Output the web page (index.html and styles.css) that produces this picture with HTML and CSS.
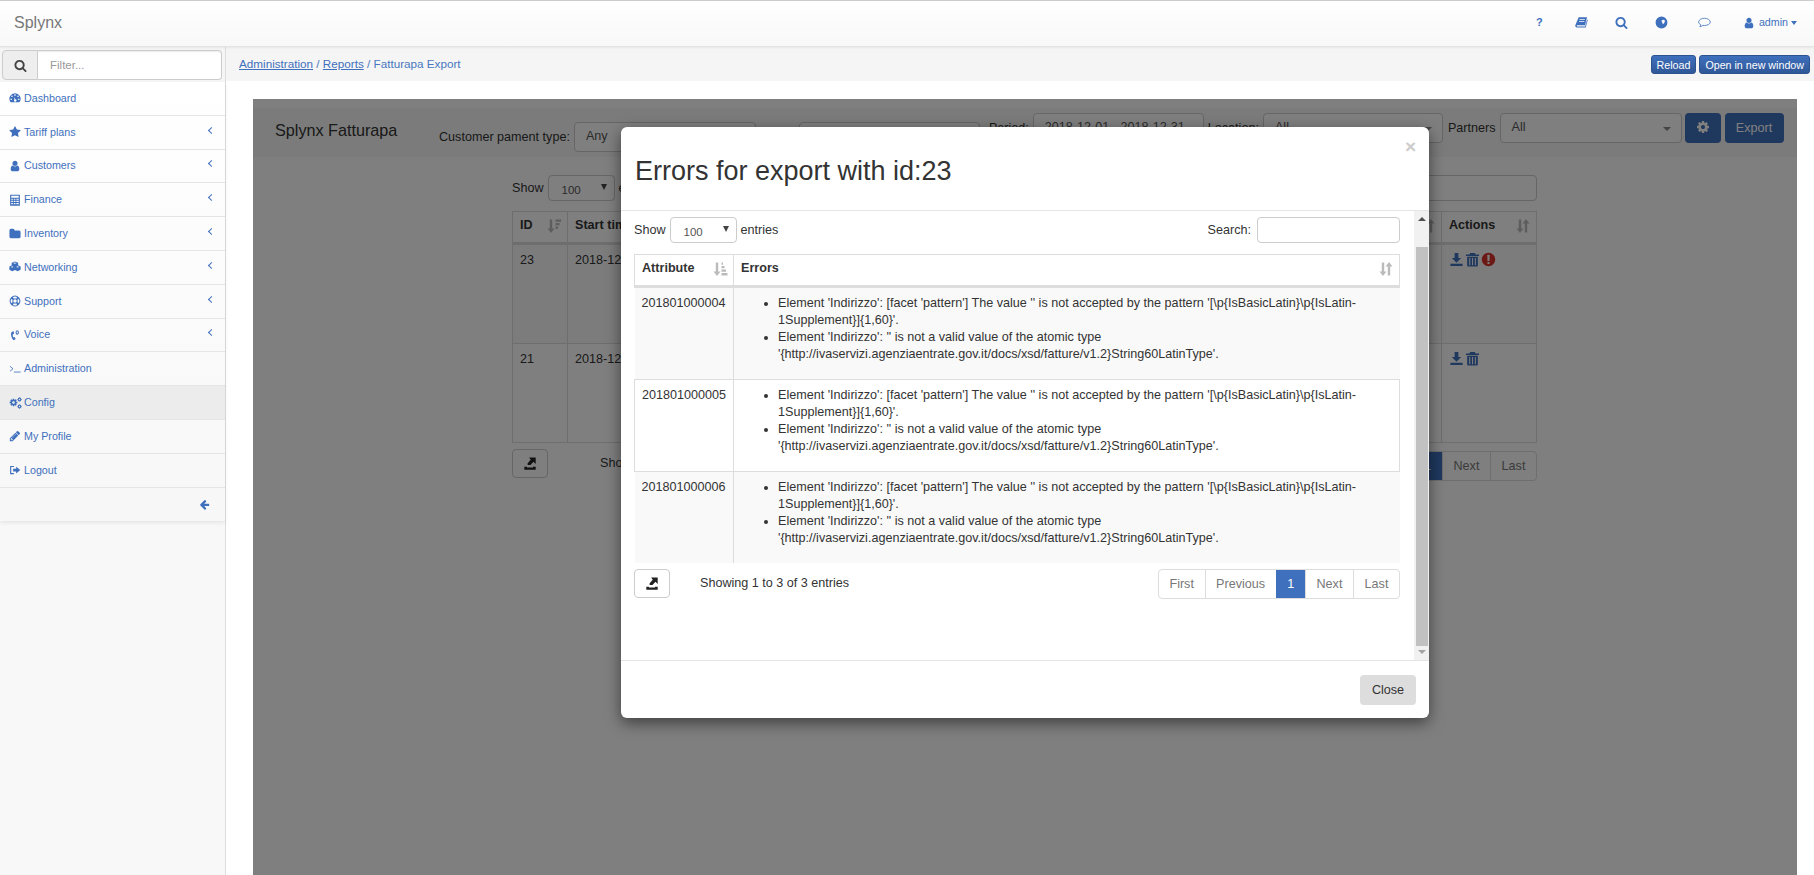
FILE: index.html

```html
<!DOCTYPE html>
<html lang="en">
<head>
    <meta charset="UTF-8">
    <title>Splynx - Fatturapa Export</title>
    <link rel="stylesheet" href="styles.css">
</head>
<body>

    <!-- Icon set -->
    <svg class="icon-defs" xmlns="http://www.w3.org/2000/svg">
        <symbol id="i-star" viewBox="0 0 1792 1792"><path d="M1728 647q0 22-26 48l-363 354 86 500q1 7 1 20 0 21-10.5 35.5t-30.5 14.5q-19 0-40-12l-449-236-449 236q-22 12-40 12-21 0-31.5-14.5t-10.5-35.5q0-6 2-20l86-500-364-354q-25-27-25-48 0-37 56-46l502-73 225-455q19-41 49-41t49 41l225 455 502 73q56 9 56 46z"/></symbol>
        <symbol id="i-search" viewBox="0 0 1792 1792"><path d="M1216 832q0-185-131.5-316.5t-316.5-131.5-316.5 131.5-131.5 316.5 131.5 316.5 316.5 131.5 316.5-131.5 131.5-316.5zm512 832q0 52-38 90t-90 38q-54 0-90-38l-343-342q-179 124-399 124-143 0-273.5-55.5t-225-150-150-225-55.5-273.5 55.5-273.5 150-225 225-150 273.5-55.5 273.5 55.5 225 150 150 225 55.5 273.5q0 220-124 399l343 343q37 37 37 90z"/></symbol>
        <symbol id="i-user" viewBox="0 0 1792 1792"><path d="M1536 1399q0 109-62.5 187t-150.5 78h-854q-88 0-150.5-78t-62.5-187q0-85 8.5-160.5t31.5-152 58.5-131 94-89 134.5-34.5q131 128 313 128t313-128q76 0 134.5 34.5t94 89 58.5 131 31.5 152 8.5 160.5zm-256-887q0 159-112.5 271.5t-271.5 112.5-271.5-112.5-112.5-271.5 112.5-271.5 271.5-112.5 271.5 112.5 112.5 271.5z"/></symbol>
        <symbol id="i-folder" viewBox="0 0 1792 1792"><path d="M1728 608v704q0 92-66 158t-158 66h-1216q-92 0-158-66t-66-158v-960q0-92 66-158t158-66h320q92 0 158 66t66 158v32h672q92 0 158 66t66 158z"/></symbol>
        <symbol id="i-arrow-left" viewBox="0 0 1792 1792"><path d="M1664 896v128q0 53-32.5 90.5t-84.5 37.5h-704l293 294q38 36 38 90t-38 90l-75 76q-37 37-90 37-52 0-91-37l-651-652q-37-37-37-90 0-52 37-91l651-650q38-38 91-38 52 0 90 38l75 74q38 38 38 91t-38 91l-293 293h704q52 0 84.5 37.5t32.5 90.5z"/></symbol>
        <symbol id="i-pencil" viewBox="0 0 1792 1792"><path d="M491 1536l91-91-235-235-91 91v107h128v128h107zm523-928q0-22-22-22-10 0-17 7l-542 542q-7 7-7 17 0 22 22 22 10 0 17-7l542-542q7-7 7-17zm-54-192l416 416-832 832h-416v-416zm683 96q0 53-37 90l-166 166-416-416 166-165q36-38 90-38 53 0 91 38l235 234q37 39 37 91z"/></symbol>
        <symbol id="i-cog" viewBox="0 0 1792 1792"><path d="M1152 896q0-106-75-181t-181-75-181 75-75 181 75 181 181 75 181-75 75-181zm512-109v222q0 12-8 23t-20 13l-185 28q-19 54-39 91 35 50 107 138 10 12 10 25t-9 23q-27 37-99 108t-94 71q-12 0-26-9l-138-108q-44 23-91 38-16 136-29 186-7 28-36 28h-222q-14 0-24.5-8.5t-11.5-21.5l-28-184q-49-16-90-37l-141 107q-10 9-25 9-14 0-25-11-126-114-165-168-7-10-7-23 0-12 8-23 15-21 51-66.5t54-70.5q-27-50-41-99l-183-27q-13-2-21-12.5t-8-23.5v-222q0-12 8-23t19-13l186-28q14-46 39-92-40-57-107-138-10-12-10-24 0-10 9-23 26-36 98.5-107.5t94.5-71.5q13 0 26 10l138 107q44-23 91-38 16-136 29-186 7-28 36-28h222q14 0 24.5 8.5t11.5 21.5l28 184q49 16 90 37l142-107q9-9 24-9 13 0 25 10 129 119 165 170 7 8 7 22 0 12-8 23-15 21-51 66.5t-54 70.5q26 50 41 98l183 28q13 2 21 12.5t8 23.5z"/></symbol>
        <symbol id="i-dashboard" viewBox="0 0 16 16"><path fill-rule="evenodd" d="M8 1.500a7.500 7.500 0 0 0-6.400 11.400c.2.400.6.600 1 .600h10.800c.4 0 .8-.2 1-.6A7.500 7.500 0 0 0 8 1.500zM8 3a1.100 1.100 0 1 1 0 2.200A1.100 1.100 0 0 1 8 3zM4 4.600a1.100 1.100 0 1 1 0 2.200 1.100 1.100 0 0 1 0-2.200zm8 0a1.100 1.100 0 1 1 0 2.200 1.100 1.100 0 0 1 0-2.200zM2.900 8.500a1.100 1.100 0 1 1 0 2.200 1.100 1.100 0 0 1 0-2.200zm10.200 0a1.100 1.100 0 1 1 0 2.200 1.100 1.100 0 0 1 0-2.200zM6.800 6.600l1.600 3.200a1.600 1.600 0 1 1-1.200.5z"/></symbol>
        <symbol id="i-calculator" viewBox="0 0 16 16"><path fill-rule="evenodd" d="M1.500 1h13v14.500h-13zM3 2.300v2.600h10V2.300zM3 6.200v1.600h2.200V6.200zm3.400 0v1.600h2.200V6.200zm3.400 0v1.600H13V6.200zM3 9v1.600h2.200V9zm3.400 0v1.600h2.200V9zm3.400 0v1.600H13V9zM3 11.900v1.900h2.200v-1.900zm3.400 0v1.900h2.200v-1.900zm3.400 0v1.900H13v-1.900z"/></symbol>
        <symbol id="i-cubes" viewBox="0 0 16 16"><path fill-rule="evenodd" d="M7.800.5l4.400 1.700v3.600l3.300 1.400v4.300l-4 2.100-3.500-1.700-3.700 1.700-3.800-2V7.200l3.100-1.400V2.200zM7.800 1.900L5.400 2.800l2.400 1 2.400-1zM4.200 7l-2 .9 2 .9 2-.9zm7.300 0l-2 .9 2 .9 2-.9z"/></symbol>
        <symbol id="i-lifering" viewBox="0 0 16 16"><path fill-rule="evenodd" d="M8 .8a7.200 7.200 0 1 1 0 14.400A7.200 7.200 0 0 1 8 .8zM5.300 2.800l1 2.100a3.500 3.500 0 0 1 3.400 0l1-2.100a5.800 5.800 0 0 0-5.400 0zm-2.500 2.500a5.800 5.800 0 0 0 0 5.400l2.100-1a3.500 3.500 0 0 1 0-3.400zm10.400 0l-2.100 1a3.500 3.500 0 0 1 0 3.400l2.100 1a5.800 5.800 0 0 0 0-5.400zM6.300 11.100l-1 2.100a5.800 5.800 0 0 0 5.400 0l-1-2.100a3.500 3.500 0 0 1-3.400 0zM8 5.700a2.300 2.300 0 1 0 0 4.600 2.300 2.300 0 0 0 0-4.600z"/></symbol>
        <symbol id="i-voice" viewBox="0 0 16 16"><path d="M5.500 3L3 4.800C2 7.800 3.400 12.300 6 15l2.600-1.300c.3-.2.3-.5.2-.8L7.500 11c-.2-.2-.4-.3-.7-.2l-1.100.5C5 9.800 4.900 8 5.100 7l1.200-.4c.3-.1.400-.3.400-.6L6.200 3.300c-.1-.3-.4-.4-.7-.3z"/><path d="M11 1.500c1.500 0 2.200 1.400 2.200 3s-.7 3-2.200 3-2.200-1.400-2.200-3 .7-3 2.200-3zm0 1.500c-.5 0-.8.700-.8 1.500S10.500 6 11 6s.8-.7.8-1.500S11.500 3 11 3z"/></symbol>
        <symbol id="i-terminal" viewBox="0 0 16 16"><path d="M1.300 4.400l4 3.300-4 3.300" fill="none" stroke="currentColor" stroke-width="1.100"/><path d="M6.500 11.500h9v1.100h-9z"/></symbol>
        <symbol id="i-signout" viewBox="0 0 16 16"><path d="M1.500 2.500h5v1.600H3v8h3.500v1.600h-5z"/><path d="M9.500 3.500l5.500 4.600-5.500 4.600V10H5.500V6.200h4z"/></symbol>
        <symbol id="i-book" viewBox="0 0 16 16"><path fill-rule="evenodd" d="M4.500 1.500h10.300l-2.500 10H2.800c-.8 0-1 1.300 0 1.300h9.700l2.400-8.500.8.500-2.500 9.200H2.500C.8 14 0 12.500.5 11zM5.800 4h6.300v1H5.500zM5.200 6h6.300v1H4.900z"/></symbol>
        <symbol id="i-globe" viewBox="0 0 16 16"><path fill-rule="evenodd" d="M8 .7a7.300 7.300 0 1 1 0 14.600A7.300 7.300 0 0 1 8 .7zm2.200 3.800L8 5.500l.5 2 1.300 2.700 1.600-1.500.8-2.400-.6-1.300z"/></symbol>
        <symbol id="i-comment" viewBox="0 0 16 16"><path d="M8 2.800C4.200 2.800.8 4.800.8 7.400c0 1.500 1.100 2.700 2.700 3.500-.1.900-.6 1.600-1.200 2.300 1.400-.1 2.700-.8 3.600-1.700.7.100 1.400.2 2.100.2 3.800 0 7.200-2 7.200-4.300S11.800 2.800 8 2.800z" fill="none" stroke="currentColor" stroke-width="1"/></symbol>
        <symbol id="i-sort-desc" viewBox="0 0 16 16"><path d="M3.800 1.500h2.400v9H8.500L5 15 1.500 10.500h2.300zM9.500 1.500H15v2.200H9.500zM9.500 5H13.500v2.200H9.500zM9.500 8.500H12v2.200H9.500z"/></symbol>
        <symbol id="i-sort-asc" viewBox="0 0 16 16"><path d="M3.800 1.500h2.400v9H8.500L5 15 1.500 10.500h2.300zM9.500 1.500H11v2.200H9.500zM9.500 5H12.500v2.200H9.500zM9.500 8.500H14v2.200H9.500zM9.500 12H15.500v2.500H9.500z"/></symbol>
        <symbol id="i-sort" viewBox="0 0 16 16"><path d="M3.800 1.500h2.400v9H8.500L5 15 1.500 10.500h2.300zM9.800 14.500v-9H7.500L11 1l3.500 4.500h-2.300v9z"/></symbol>
        <symbol id="i-download" viewBox="0 0 16 16"><path d="M6 1h4v5.500h3L8 11.500 3 6.500h3zM1.500 12.500h13V15h-13z"/></symbol>
        <symbol id="i-trash" viewBox="0 0 16 16"><path fill-rule="evenodd" d="M5.500 1h5l.8 1.700H15v1.500H1V2.700h3.700zM2.300 5h11.400v9.200c0 .8-.5 1.300-1.200 1.300h-9c-.7 0-1.200-.5-1.200-1.300zm2.200 1.500v7.500h1.100V6.500zm3 0v7.500h1.100V6.500zm3 0v7.500h1.100V6.500z"/></symbol>
        <symbol id="i-alert" viewBox="0 0 16 16"><path fill-rule="evenodd" d="M8 .8a7.200 7.200 0 1 1 0 14.400A7.200 7.200 0 0 1 8 .8zM6.700 3l.2 6.500h2.200L9.300 3zM6.900 10.600v2.100h2.200v-2.100z"/></symbol>
        <symbol id="i-export" viewBox="0 0 16 16"><path d="M7 .5h7.500V8L12 5.500 8.500 9H5.300V7L8.800 3zM1.500 11h3v1h7v-1h3v3.500h-13z"/></symbol>
    </svg>

    <!-- Top bar -->
    <header class="topbar">
        <div class="brand">Splynx</div>
        <nav class="top-icons">
            <a class="top-icon top-help">?</a>
            <a class="top-icon"><svg class="ic ic-13"><use href="#i-book"/></svg></a>
            <a class="top-icon"><svg class="ic ic-13"><use href="#i-search"/></svg></a>
            <a class="top-icon top-globe"><svg class="ic ic-13"><use href="#i-globe"/></svg></a>
            <a class="top-icon"><svg class="ic ic-13"><use href="#i-comment"/></svg></a>
            <a class="top-user"><svg class="ic ic-12"><use href="#i-user"/></svg> admin <span class="caret"></span></a>
        </nav>
    </header>

    <div class="layout">

        <!-- Sidebar Navigation -->
        <aside class="sidebar">
            <div class="filter">
                <span class="filter-addon"><svg class="ic ic-13"><use href="#i-search"/></svg></span>
                <input class="filter-input" type="text" placeholder="Filter...">
            </div>
            <ul class="menu">
                <li><a><svg class="ic"><use href="#i-dashboard"/></svg>Dashboard</a></li>
                <li><a><svg class="ic"><use href="#i-star"/></svg>Tariff plans<span class="chevron"></span></a></li>
                <li><a><svg class="ic"><use href="#i-user"/></svg>Customers<span class="chevron"></span></a></li>
                <li><a><svg class="ic"><use href="#i-calculator"/></svg>Finance<span class="chevron"></span></a></li>
                <li><a><svg class="ic"><use href="#i-folder"/></svg>Inventory<span class="chevron"></span></a></li>
                <li><a><svg class="ic"><use href="#i-cubes"/></svg>Networking<span class="chevron"></span></a></li>
                <li><a><svg class="ic"><use href="#i-lifering"/></svg>Support<span class="chevron"></span></a></li>
                <li><a><svg class="ic"><use href="#i-voice"/></svg>Voice<span class="chevron"></span></a></li>
                <li><a><svg class="ic"><use href="#i-terminal"/></svg>Administration</a></li>
                <li class="active"><a><span class="cogs"><svg class="cog-big"><use href="#i-cog"/></svg><svg class="cog-small"><use href="#i-cog"/></svg><svg class="cog-small cog-low"><use href="#i-cog"/></svg></span>Config</a></li>
                <li><a><svg class="ic"><use href="#i-pencil"/></svg>My Profile</a></li>
                <li><a><svg class="ic"><use href="#i-signout"/></svg>Logout</a></li>
                <li class="collapse-row"><svg class="ic ic-11"><use href="#i-arrow-left"/></svg></li>
            </ul>
        </aside>

        <!-- Main Content -->
        <main class="main">
            <div class="crumbs">
                <div class="crumb-path"><a href="#">Administration</a> / <a href="#">Reports</a> / Fatturapa Export</div>
                <div class="crumb-actions">
                    <button class="small-btn">Reload</button>
                    <button class="small-btn">Open in new window</button>
                </div>
            </div>

            <div class="frame-wrap">
                <div class="frame">

                    <!-- Page behind the dialog -->
                    <div class="panel-head">
                        <div class="panel-title">Splynx Fatturapa</div>
                        <div class="field field-low">
                            <label>Customer pament type:</label>
                            <div class="fake-select w-182">Any<span class="caret-grey"></span></div>
                        </div>
                        <div class="field field-low field-second">
                            <div class="fake-select w-181">All<span class="caret-grey"></span></div>
                        </div>
                        <div class="field field-period">
                            <label>Period:</label>
                            <div class="fake-select w-171">2018-12-01 - 2018-12-31</div>
                        </div>
                        <div class="field field-location">
                            <label>Location:</label>
                            <div class="fake-select w-180">All<span class="caret-grey"></span></div>
                        </div>
                        <div class="field field-partners">
                            <label>Partners</label>
                            <div class="fake-select w-182">All<span class="caret-grey"></span></div>
                        </div>
                        <button class="gear-btn"><svg class="ic ic-14"><use href="#i-cog"/></svg></button>
                        <button class="export-btn">Export</button>
                    </div>

                    <div class="panel-body">
                        <div class="list-top">
                            <div class="show-row">Show <div class="mini-select">100<span class="caret-dark"></span></div> entries</div>
                            <div class="back-search"></div>
                        </div>
                        <table class="back-table">
                            <thead>
                                <tr>
                                    <th class="col-id">ID<svg class="sort-ic"><use href="#i-sort-desc"/></svg></th>
                                    <th class="col-start">Start time</th>
                                    <th>Status<svg class="sort-ic"><use href="#i-sort"/></svg></th>
                                    <th class="col-actions">Actions<svg class="sort-ic"><use href="#i-sort"/></svg></th>
                                </tr>
                            </thead>
                            <tbody>
                                <tr class="row-first">
                                    <td>23</td>
                                    <td>2018-12-20 10:42:17</td>
                                    <td>Error</td>
                                    <td>
                                        <svg class="act act-blue"><use href="#i-download"/></svg><svg class="act act-blue"><use href="#i-trash"/></svg><svg class="act act-red"><use href="#i-alert"/></svg>
                                    </td>
                                </tr>
                                <tr class="row-second">
                                    <td>21</td>
                                    <td>2018-12-19 16:05:33</td>
                                    <td>Done</td>
                                    <td>
                                        <svg class="act act-blue"><use href="#i-download"/></svg><svg class="act act-blue"><use href="#i-trash"/></svg>
                                    </td>
                                </tr>
                            </tbody>
                        </table>
                        <div class="list-bottom">
                            <button class="export-icon-btn"><svg class="ic ic-14"><use href="#i-export"/></svg></button>
                            <span class="list-info">Showing 1 to 2 of 2 entries</span>
                            <div class="pager back-pager">
                                <a class="active">1</a><a>Next</a><a>Last</a>
                            </div>
                        </div>
                    </div>

                    <div class="backdrop"></div>

                    <!-- Dialog -->
                    <div class="modal">
                        <div class="modal-head">
                            <span class="modal-close">&times;</span>
                            <h3>Errors for export with id:23</h3>
                        </div>
                        <div class="modal-body">
                            <div class="modal-scroll">
                                <div class="list-top modal-top">
                                    <div class="show-row">Show <div class="mini-select">100<span class="caret-dark"></span></div> entries</div>
                                    <div class="search-row">Search: <input class="search-input" type="text"></div>
                                </div>
                                <table class="error-table">
                                    <thead>
                                        <tr>
                                            <th class="col-attr">Attribute<svg class="sort-ic"><use href="#i-sort-asc"/></svg></th>
                                            <th>Errors<svg class="sort-ic"><use href="#i-sort"/></svg></th>
                                        </tr>
                                    </thead>
                                    <tbody>
                                        <tr class="striped">
                                            <td>201801000004</td>
                                            <td>
                                                <ul>
                                                    <li>Element 'Indirizzo': [facet 'pattern'] The value '' is not accepted by the pattern '[\p{IsBasicLatin}\p{IsLatin-1Supplement}]{1,60}'.</li>
                                                    <li>Element 'Indirizzo': '' is not a valid value of the atomic type '{http://ivaservizi.agenziaentrate.gov.it/docs/xsd/fatture/v1.2}String60LatinType'.</li>
                                                </ul>
                                            </td>
                                        </tr>
                                        <tr>
                                            <td>201801000005</td>
                                            <td>
                                                <ul>
                                                    <li>Element 'Indirizzo': [facet 'pattern'] The value '' is not accepted by the pattern '[\p{IsBasicLatin}\p{IsLatin-1Supplement}]{1,60}'.</li>
                                                    <li>Element 'Indirizzo': '' is not a valid value of the atomic type '{http://ivaservizi.agenziaentrate.gov.it/docs/xsd/fatture/v1.2}String60LatinType'.</li>
                                                </ul>
                                            </td>
                                        </tr>
                                        <tr class="striped">
                                            <td>201801000006</td>
                                            <td>
                                                <ul>
                                                    <li>Element 'Indirizzo': [facet 'pattern'] The value '' is not accepted by the pattern '[\p{IsBasicLatin}\p{IsLatin-1Supplement}]{1,60}'.</li>
                                                    <li>Element 'Indirizzo': '' is not a valid value of the atomic type '{http://ivaservizi.agenziaentrate.gov.it/docs/xsd/fatture/v1.2}String60LatinType'.</li>
                                                </ul>
                                            </td>
                                        </tr>
                                    </tbody>
                                </table>
                                <div class="list-bottom modal-bottom">
                                    <button class="export-icon-btn"><svg class="ic ic-14"><use href="#i-export"/></svg></button>
                                    <span class="list-info">Showing 1 to 3 of 3 entries</span>
                                    <div class="pager">
                                        <a>First</a><a>Previous</a><a class="active">1</a><a>Next</a><a>Last</a>
                                    </div>
                                </div>
                            </div>
                            <div class="scrollbar">
                                <span class="arrow-up"></span>
                                <div class="thumb"></div>
                                <span class="arrow-down"></span>
                            </div>
                        </div>
                        <div class="modal-foot">
                            <button class="close-btn">Close</button>
                        </div>
                    </div>

                </div>
            </div>
        </main>
    </div>

</body>
</html>
```

FILE: styles.css

```css
/* General Styles */
* {
    margin: 0;
    padding: 0;
    box-sizing: border-box;
}

html, body {
    height: 875px;
    overflow: hidden;
}

body {
    display: flex;
    flex-direction: column;
    background: #fff;
    color: #333;
    font-family: "Liberation Sans", Arial, sans-serif;
    font-size: 12.6px;
    line-height: 17px;
}

button, input {
    font-family: inherit;
}

.icon-defs {
    display: none;
}

.ic {
    display: inline-block;
    width: 13px;
    height: 13px;
    fill: currentColor;
    flex: none;
}

.ic-11 { width: 11px; height: 11px; }
.ic-12 { width: 12px; height: 12px; }
.ic-13 { width: 13px; height: 13px; }
.ic-14 { width: 14px; height: 14px; }

/* Top bar */
.topbar {
    flex: none;
    height: 47px;
    display: flex;
    align-items: center;
    justify-content: space-between;
    padding: 0 17px 2px 14px;
    border-top: 1px solid #ccc;
    border-bottom: 1px solid #e4e4e4;
    background: linear-gradient(#fff, #f8f8f8);
    box-shadow: 0 1px 2px rgba(0, 0, 0, 0.06);
    position: relative;
}

.brand {
    font-size: 16px;
    color: #777;
}

.top-icons {
    display: flex;
    align-items: center;
    color: #3f70bd;
}

.top-icon {
    width: 13px;
    height: 13px;
    margin-right: 27px;
    display: flex;
    align-items: center;
    justify-content: center;
}

.top-help {
    font-size: 11px;
    font-weight: bold;
    margin-right: 29px;
}

.top-globe {
    margin-right: 30px;
}

.top-user {
    display: flex;
    align-items: center;
    gap: 4px;
    font-size: 10.7px;
    margin-left: 5px;
}

.caret {
    width: 0;
    height: 0;
    border-left: 3.5px solid transparent;
    border-right: 3.5px solid transparent;
    border-top: 4px solid #3f70bd;
    margin-left: -1px;
}

.layout {
    flex: 1;
    display: flex;
    min-height: 0;
}

/* Sidebar Navigation */
.sidebar {
    flex: none;
    width: 226px;
    background: #f8f8f8;
    border-right: 1px solid #ddd;
}

.filter {
    display: flex;
    height: 35px;
    padding: 3px 3px 2px 2px;
    background: #f5f5f5;
}

.filter-addon {
    width: 36px;
    display: flex;
    align-items: center;
    justify-content: center;
    color: #444;
    background: #eee;
    border: 1px solid #ccc;
    border-radius: 4px 0 0 4px;
}

.filter-input {
    flex: 1;
    min-width: 0;
    border: 1px solid #ccc;
    border-left: 0;
    border-radius: 0 4px 4px 0;
    padding: 0 12px;
    font-size: 11.5px;
    background: #fff;
    box-shadow: inset 0 1px 1px rgba(0, 0, 0, 0.075);
}

.filter-input::placeholder {
    color: #999;
}

.menu {
    list-style: none;
    background: linear-gradient(#fff, #f7f7f7);
    box-shadow: 0 2px 4px rgba(0, 0, 0, 0.08);
}

.menu li {
    height: 33.8px;
    border-bottom: 1px solid #e5e5e5;
}

.menu a {
    height: 100%;
    display: flex;
    align-items: center;
    padding: 0 11px 0 9px;
    color: #3f70bd;
    font-size: 10.7px;
}

.menu .ic, .cogs {
    margin-right: 3px;
    width: 12px;
    height: 12px;
}

.menu .active {
    background: #ececec;
}

.chevron {
    margin-left: auto;
    margin-bottom: 4px;
    width: 5px;
    height: 5px;
    border-left: 1px solid #3f70bd;
    border-bottom: 1px solid #3f70bd;
    transform: rotate(45deg);
}

.cogs {
    position: relative;
    flex: none;
}

.cog-big {
    position: absolute;
    left: 0;
    top: 1.5px;
    width: 9px;
    height: 9px;
    fill: #3f70bd;
}

.cog-small {
    position: absolute;
    left: 8px;
    top: 0;
    width: 5px;
    height: 5px;
    fill: #3f70bd;
}

.cog-low {
    top: 7px;
}

.menu .collapse-row {
    display: flex;
    align-items: center;
    justify-content: flex-end;
    padding-right: 15px;
    color: #3f70bd;
    border-bottom: 0;
}

.menu .collapse-row .ic {
    width: 11px;
    height: 11px;
    margin: 0;
}

/* Main Content */
.main {
    flex: 1;
    min-width: 0;
    display: flex;
    flex-direction: column;
}

.crumbs {
    flex: none;
    height: 34px;
    display: flex;
    align-items: center;
    justify-content: space-between;
    padding: 0 4px 0 13px;
    background: #f5f5f5;
    font-size: 11.7px;
    color: #4a78c0;
}

.crumb-path {
    padding-bottom: 2px;
}

.crumb-path a {
    color: #3f70bd;
    text-decoration: underline;
}

.crumb-actions {
    display: flex;
    gap: 3px;
    padding-top: 1px;
}

.small-btn {
    height: 19px;
    padding: 0 5px;
    border: 1px solid #2c5290;
    border-radius: 3px;
    background: linear-gradient(#3f70bd, #2f5797);
    color: #fff;
    font-size: 10.7px;
}

.frame-wrap {
    flex: 1;
    min-height: 0;
    padding: 18px 17px 0 27px;
}

.frame {
    position: relative;
    height: 100%;
    background: #fff;
    overflow: hidden;
}

/* Page behind the dialog */
.panel-head {
    height: 49px;
    margin-top: 9px;
    padding: 5px 0 0 22px;
    display: flex;
    align-items: flex-start;
    background: #f6f6f6;
}

.panel-title {
    flex: none;
    width: 164px;
    padding-top: 9px;
    font-size: 16.2px;
    color: #333;
}

.field {
    flex: none;
    display: flex;
    align-items: center;
    gap: 4px;
}

.field label {
    white-space: nowrap;
}

.field-low {
    margin-top: 9px;
}

.field-second {
    margin-left: 43px;
}

.field-period {
    margin-left: 9px;
}

.field-location {
    margin-left: 4px;
}

.field-partners {
    margin-left: 5px;
}

.fake-select {
    position: relative;
    height: 30px;
    padding: 0 11px;
    line-height: 27px;
    background: #fff;
    border: 1px solid #ccc;
    border-radius: 4px;
    color: #555;
}

.w-171 { width: 171px; }
.w-180 { width: 180px; }
.w-181 { width: 181px; }
.w-182 { width: 182px; }

.caret-grey {
    position: absolute;
    right: 10px;
    top: 13px;
    border-left: 4px solid transparent;
    border-right: 4px solid transparent;
    border-top: 4px solid #888;
}

.gear-btn {
    flex: none;
    width: 36px;
    height: 30px;
    margin-left: 3px;
    border: 0;
    border-radius: 4px;
    background: #3f70bd;
    color: #fff;
}

.export-btn {
    flex: none;
    width: 59px;
    height: 30px;
    margin-left: 4px;
    border: 0;
    border-radius: 4px;
    background: #3f70bd;
    color: #fff;
    font-size: 12.6px;
}

.panel-body {
    padding: 18px 260px 0 259px;
}

.list-top {
    display: flex;
    align-items: center;
    justify-content: space-between;
}

.show-row {
    display: flex;
    align-items: center;
    gap: 4px;
}

.mini-select {
    position: relative;
    width: 67px;
    height: 26px;
    padding-left: 13px;
    line-height: 28px;
    border: 1px solid #ccc;
    border-radius: 4px;
    font-size: 11.5px;
    color: #555;
    background: #fff;
}

.caret-dark {
    position: absolute;
    right: 7px;
    top: 8px;
    border-left: 3.5px solid transparent;
    border-right: 3.5px solid transparent;
    border-top: 6px solid #444;
}

.back-search {
    width: 320px;
    height: 26px;
    background: #fff;
    border: 1px solid #ccc;
    border-radius: 4px;
}

.back-table, .error-table {
    width: 100%;
    border-collapse: collapse;
    table-layout: fixed;
}

.back-table {
    margin-top: 10px;
}

.back-table th, .error-table th {
    height: 32px;
    padding: 0 5px 3px 7px;
    text-align: left;
    color: #333;
    border: 1px solid #ddd;
    border-bottom: 3px solid #ddd;
}

.back-table td, .error-table td {
    padding: 6.5px 7px;
    vertical-align: top;
    border: 1px solid #ddd;
}

.col-id { width: 55px; }
.col-start { width: 370px; }
.col-actions { width: 95px; }

.row-first {
    height: 100px;
    background: #f9f9f9;
}

.row-second {
    height: 99px;
}

.sort-ic {
    float: right;
    width: 16px;
    height: 16px;
    margin-top: 1px;
    fill: #bbb;
}

.act {
    width: 15px;
    height: 15px;
    margin-right: 1px;
}

.act-blue {
    fill: #3f70bd;
}

.act-red {
    fill: #d9302a;
}

.list-bottom {
    position: relative;
    display: flex;
    align-items: flex-start;
    margin-top: 6px;
}

.export-icon-btn {
    width: 36px;
    height: 29px;
    border: 1px solid #ccc;
    border-radius: 4px;
    background: #fff;
    color: #222;
    display: flex;
    align-items: center;
    justify-content: center;
}

.list-info {
    margin-left: 52px;
    padding-top: 6px;
}

.pager {
    margin-left: auto;
    display: flex;
    height: 30px;
    border: 1px solid #ddd;
    border-radius: 4px;
    background: #fff;
    overflow: hidden;
}

.pager a {
    padding: 0 10.6px;
    line-height: 29px;
    color: #777;
    border-left: 1px solid #ddd;
}

.pager a:first-child {
    border-left: 0;
}

.pager a.active {
    background: #3f70bd;
    color: #fff;
    border-left-color: #3f70bd;
}

.back-pager {
    margin-top: 2px;
}

/* Dialog */
.backdrop {
    position: absolute;
    inset: 0;
    background: rgba(0, 0, 0, 0.5);
}

.modal {
    position: absolute;
    left: 368px;
    top: 28px;
    width: 808px;
    height: 591px;
    display: flex;
    flex-direction: column;
    background: #fff;
    border-radius: 6px;
    box-shadow: 0 5px 15px rgba(0, 0, 0, 0.5);
}

.modal-head {
    position: relative;
    flex: none;
    height: 84px;
    padding: 29px 14px 0;
    border-bottom: 1px solid #e5e5e5;
}

.modal-head h3 {
    font-size: 27px;
    font-weight: normal;
    line-height: 30px;
    color: #333;
}

.modal-close {
    position: absolute;
    right: 13px;
    top: 11px;
    font-size: 19px;
    font-weight: bold;
    color: #ccc;
}

.modal-body {
    flex: 1;
    min-height: 0;
    display: flex;
}

.modal-scroll {
    flex: 1;
    min-width: 0;
    padding: 6px 14px 0 13px;
}

.search-row {
    display: flex;
    align-items: center;
    gap: 6px;
}

.search-input {
    width: 143px;
    height: 26px;
    border: 1px solid #ccc;
    border-radius: 4px;
    background: #fff;
}

.error-table {
    margin-top: 11px;
}

.col-attr {
    width: 99px;
}

.error-table .striped {
    background: #f9f9f9;
}

.error-table .striped td:first-child {
    border-left: 0;
}

.error-table .striped td:last-child {
    border-right: 0;
}

.error-table tbody tr:last-child td {
    border-bottom: 0;
}

.error-table ul {
    padding-left: 37px;
    margin-bottom: 10px;
}

.modal-bottom .list-info {
    margin-left: 30px;
    padding-top: 6px;
}

.scrollbar {
    flex: none;
    width: 15px;
    display: flex;
    flex-direction: column;
    align-items: center;
    background: #f1f1f1;
}

.thumb {
    width: 12px;
    height: 399px;
    margin: 26px 0 0 1px;
    background: #c1c1c1;
}

.arrow-up {
    margin-top: 6px;
    border-left: 4px solid transparent;
    border-right: 4px solid transparent;
    border-bottom: 4px solid #505050;
}

.arrow-down {
    margin-top: 4px;
    border-left: 4px solid transparent;
    border-right: 4px solid transparent;
    border-top: 4px solid #a3a3a3;
}

.modal-foot {
    flex: none;
    height: 58px;
    padding: 14px 13px 0 0;
    display: flex;
    justify-content: flex-end;
    border-top: 1px solid #e5e5e5;
}

.close-btn {
    width: 56px;
    height: 30px;
    border: 0;
    border-radius: 4px;
    background: #ddd;
    color: #333;
    font-size: 12.6px;
}
```
